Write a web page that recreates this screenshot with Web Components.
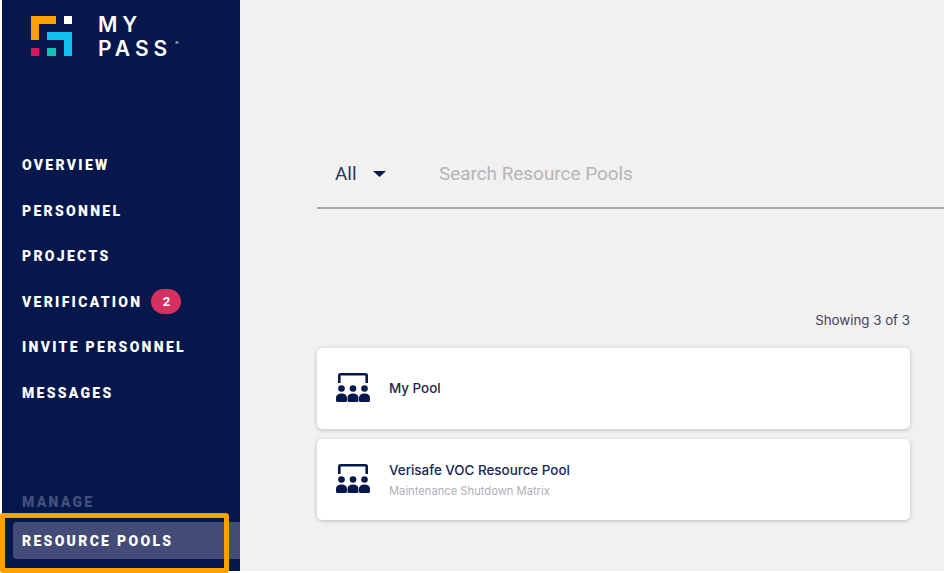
<!DOCTYPE html>
<html>
<head>
<meta charset="utf-8">
<title>My Pass</title>
<style>
  html, body { margin: 0; height: 100%; background: #fff; overflow: hidden; }
  body { font-family: "Inter", "Liberation Sans", sans-serif; }
</style>
</head>
<body>
<app-shell>
  <side-nav slot="nav"></side-nav>
  <pools-page></pools-page>
</app-shell>

<script>
class AppShell extends HTMLElement {
  constructor() {
    super();
    this.attachShadow({ mode: 'open' }).innerHTML = `
      <style>
        :host { display: flex; width: 944px; height: 571px; padding-left: 2px; box-sizing: border-box; position: relative; }
        .mark {
          position: absolute; left: 0; top: 513px; width: 229px; height: 60px;
          box-sizing: border-box; border: 5px solid #ffa000; border-radius: 3px;
        }
      </style>
      <slot name="nav"></slot>
      <slot></slot>
      <div class="mark"></div>
    `;
  }
}

class BrandLogo extends HTMLElement {
  constructor() {
    super();
    this.attachShadow({ mode: 'open' }).innerHTML = `
      <style>
        :host { display: flex; gap: 26px; align-items: flex-start; color: #fff; height: 45px; }
        svg { display: block; flex: none; }
        .name { font: 600 21px/24px "Inter", sans-serif; letter-spacing: 5px; margin-top: -3px; margin-left: -1px; }
        .name div { height: 24px; white-space: nowrap; }
        sup { font-size: 5px; line-height: 0; letter-spacing: 0; vertical-align: 11px; margin-left: 3px; opacity: .8; }
      </style>
      <svg width="42" height="40" viewBox="0 0 42 40">
        <path d="M0 0h25v8H8v16H0z" fill="#ffa000"/>
        <rect x="33" y="0" width="8" height="8" fill="#fff"/>
        <path d="M16 16h25v24h-8V24H16z" fill="#0fc1ee"/>
        <rect x="0" y="32" width="8" height="8" fill="#e0115f"/>
        <rect x="16" y="32" width="9" height="8" fill="#0cc4b4"/>
      </svg>
      <div class="name"><div>MY</div><div>PASS<sup>®</sup></div></div>
    `;
  }
}

class NavItem extends HTMLElement {
  constructor() {
    super();
    this.attachShadow({ mode: 'open' }).innerHTML = `
      <style>
        :host {
          display: flex; align-items: center; gap: 9px; height: 45.5px; padding-left: 20px;
          font: 900 14px/1 "Roboto", sans-serif; letter-spacing: 2.3px; color: #fff;
        }
        :host([active]) {
          height: 37px; margin-left: 11px; padding-left: 9px; background: #434c77;
          border-radius: 4px 0 0 4px;
        }
        .badge {
          display: none; width: 30px; height: 25px; border-radius: 13px; background: #d5305f;
          align-items: center; justify-content: center; letter-spacing: 0; font-size: 13px; font-weight: 700;
        }
        :host([badge]) .badge { display: flex; }
      </style>
      <span><slot></slot></span>
      <span class="badge">${this.getAttribute('badge') || ''}</span>
    `;
  }
}

class SideNav extends HTMLElement {
  constructor() {
    super();
    this.attachShadow({ mode: 'open' }).innerHTML = `
      <style>
        :host {
          display: flex; flex-direction: column; width: 238px; flex: none; height: 100%;
          background: #06174c; box-sizing: border-box;
        }
        brand-logo { margin: 16px 0 0 29px; }
        .links { margin-top: 81.5px; }
        .label {
          margin: 76.5px 0 0 20px; height: 20px;
          font: 900 14px/20px "Roboto", sans-serif; letter-spacing: 2.3px; color: #434f7c;
        }
        nav-item[active] { margin-top: 10px; }
      </style>
      <brand-logo></brand-logo>
      <div class="links">
        <nav-item>OVERVIEW</nav-item>
        <nav-item>PERSONNEL</nav-item>
        <nav-item>PROJECTS</nav-item>
        <nav-item badge="2">VERIFICATION</nav-item>
        <nav-item>INVITE PERSONNEL</nav-item>
        <nav-item>MESSAGES</nav-item>
      </div>
      <div class="label">MANAGE</div>
      <nav-item active>RESOURCE POOLS</nav-item>
    `;
  }
}

class SearchBar extends HTMLElement {
  constructor() {
    super();
    this.attachShadow({ mode: 'open' }).innerHTML = `
      <style>
        :host {
          display: flex; align-items: center; height: 70px; padding: 2px 0 0 18px; box-sizing: border-box;
          border-bottom: 2px solid #a9a9a9; font: 400 18.9px/1 "Roboto", sans-serif;
        }
        .all { color: #2b3560; width: 38px; }
        svg { display: block; margin-right: 53px; }
        .hint { color: #b5b5b5; }
      </style>
      <span class="all">All</span>
      <svg width="13" height="6" viewBox="0 0 13 6"><path d="M0 0h13L6.5 6z" fill="#06174c"/></svg>
      <span class="hint">Search Resource Pools</span>
    `;
  }
}

class PoolCard extends HTMLElement {
  constructor() {
    super();
    const sub = this.getAttribute('sub');
    this.attachShadow({ mode: 'open' }).innerHTML = `
      <style>
        :host {
          display: flex; align-items: center; height: 81px; padding-left: 19px; box-sizing: border-box;
          background: #fff; border-radius: 5px; box-shadow: 0 1px 4px rgba(0,0,0,.22);
        }
        svg { display: block; flex: none; margin: 0 19px 2px 0; }
        .title { font: 500 13.4px/17px "Inter", sans-serif; color: #1c2650; }
        .sub { font: 400 11.2px/13px "Inter", sans-serif; color: #b0b0b8; margin-top: 6px; }
      </style>
      <svg width="34" height="29" viewBox="0 0 34 29" fill="#06174c">
        <path d="M2 10V2.500Q2 0 4.500 0h25Q32 0 32 2.500V10h-2.600V2.600H4.600V10z"/>
        <circle cx="5.500" cy="15.500" r="3.300"/><circle cx="17" cy="15.500" r="3.300"/><circle cx="28.500" cy="15.500" r="3.300"/>
        <path d="M0 27.500v-2.500Q0 20.500 5.500 20.500T11 25v2.500Q11 29 9.500 29h-8Q0 29 0 27.500zM11.500 27.500v-2.500Q11.500 20.500 17 20.500T22.500 25v2.500Q22.500 29 21 29h-8Q11.500 29 11.500 27.500zM23 27.500v-2.500Q23 20.500 28.500 20.500T34 25v2.500Q34 29 32.500 29h-8Q23 29 23 27.500z"/>
      </svg>
      <div>
        <div class="title"><slot></slot></div>
        ${sub ? `<div class="sub">${sub}</div>` : ''}
      </div>
    `;
  }
}

class PoolsPage extends HTMLElement {
  constructor() {
    super();
    this.attachShadow({ mode: 'open' }).innerHTML = `
      <style>
        :host {
          display: block; flex: 1; background: #f1f1f1; padding: 139px 0 0 77px; box-sizing: border-box;
          position: relative; overflow: hidden; min-width: 0;
        }
        .count {
          margin: 102px 34px 19px 0; text-align: right; height: 18px;
          font: 400 13.3px/18px "Inter", sans-serif; color: #3c4560;
        }
        .list { display: flex; flex-direction: column; gap: 10px; margin-right: 34px; }
      </style>
      <search-bar></search-bar>
      <div class="count">Showing 3 of 3</div>
      <div class="list">
        <pool-card>My Pool</pool-card>
        <pool-card sub="Maintenance Shutdown Matrix">Verisafe VOC Resource Pool</pool-card>
      </div>
    `;
  }
}

customElements.define('app-shell', AppShell);
customElements.define('brand-logo', BrandLogo);
customElements.define('nav-item', NavItem);
customElements.define('side-nav', SideNav);
customElements.define('search-bar', SearchBar);
customElements.define('pool-card', PoolCard);
customElements.define('pools-page', PoolsPage);
</script>
</body>
</html>
